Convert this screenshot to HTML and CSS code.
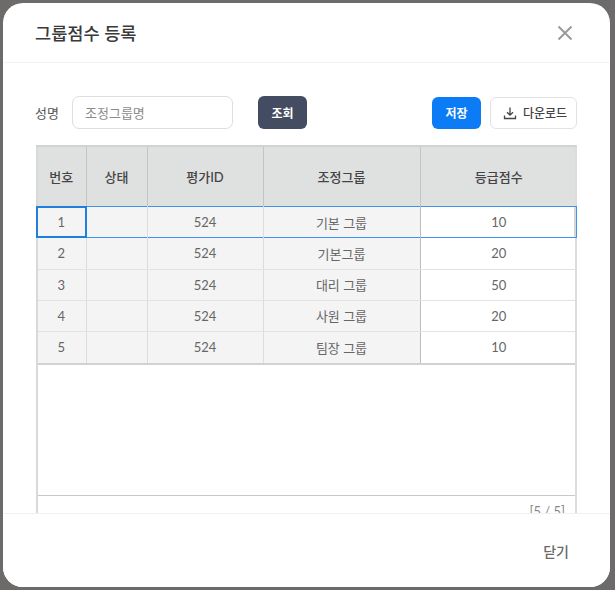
FILE: index.html
```html
<!DOCTYPE html>
<html lang="ko">
<head>
<meta charset="utf-8">
<title>그룹점수 등록</title>
<link rel="stylesheet" href="styles.css">
</head>
<body>
<section class="dialog">
  <header class="dialog-header">
    <h1 class="dialog-title">그룹점수 등록</h1>
    <button class="close-btn" aria-label="닫기">
      <svg width="16" height="16" viewBox="0 0 16 16"><path d="M1.5 1.5 14.5 14.5M14.5 1.5 1.5 14.5" fill="none" stroke="#9a9a9a" stroke-width="2"/></svg>
    </button>
  </header>
  <div class="dialog-body">
    <div class="toolbar">
      <label class="field-label">성명</label>
      <input class="text-input" placeholder="조정그룹명">
      <button class="btn btn-dark">조회</button>
      <div class="toolbar-right">
        <button class="btn btn-primary">저장</button>
        <button class="btn btn-outline">
          <svg width="14" height="14" viewBox="0 0 14 14"><path d="M7 1.5V9M4 6.2 7 9.2 10 6.2M1.5 9.5V12.5H12.5V9.5" fill="none" stroke="#444" stroke-width="1.3"/></svg>
          다운로드
        </button>
      </div>
    </div>
    <div class="grid">
      <table class="grid-table">
        <colgroup><col class="c1"><col class="c2"><col class="c3"><col class="c4"><col class="c5"></colgroup>
        <thead>
          <tr><th>번호</th><th>상태</th><th>평가ID</th><th>조정그룹</th><th>등급점수</th></tr>
        </thead>
        <tbody>
          <tr class="selected"><td class="ro focus">1</td><td class="ro"></td><td class="ro">524</td><td class="ro">기본 그룹</td><td>10</td></tr>
          <tr><td class="ro">2</td><td class="ro"></td><td class="ro">524</td><td class="ro">기본그룹</td><td>20</td></tr>
          <tr><td class="ro">3</td><td class="ro"></td><td class="ro">524</td><td class="ro">대리 그룹</td><td>50</td></tr>
          <tr><td class="ro">4</td><td class="ro"></td><td class="ro">524</td><td class="ro">사원 그룹</td><td>20</td></tr>
          <tr class="last"><td class="ro">5</td><td class="ro"></td><td class="ro">524</td><td class="ro">팀장 그룹</td><td>10</td></tr>
        </tbody>
      </table>
      <div class="grid-empty"></div>
      <div class="grid-status">[5 / 5]</div>
    </div>
  </div>
  <footer class="dialog-footer">
    <button class="text-btn">닫기</button>
  </footer>
</section>
</body>
</html>
```
FILE: styles.css
```css
* { box-sizing: border-box; }
html, body { height: 100%; }
body {
  margin: 0;
  padding: 3px 5px 3px 3px;
  overflow: hidden;
  background: #6c6b6a;
  font-family: Lato, "Noto Sans CJK KR", sans-serif;
  color: #555;
  font-size: 13px;
}
button, input { font-family: inherit; }
.dialog {
  position: relative;
  height: 584px;
  background: #fff;
  border-radius: 20px;
  display: flex;
  flex-direction: column;
  overflow: hidden;
}
.dialog-header {
  height: 60px;
  flex: none;
  display: flex;
  align-items: center;
  justify-content: space-between;
  padding: 0 37px 0 32px;
  border-bottom: 1px solid #f3f3f3;
}
.dialog-title {
  margin: 0;
  font-size: 17.6px;
  font-weight: 500;
  color: #3a3a3a;
}
.close-btn {
  width: 16px;
  height: 16px;
  padding: 0;
  border: 0;
  background: none;
  display: block;
}
.close-btn svg { display: block; }
.dialog-body {
  flex: 1;
  min-height: 0;
  overflow: hidden;
  padding: 33px 33px 0;
  display: flex;
  flex-direction: column;
}
.toolbar {
  display: flex;
  align-items: center;
  height: 33px;
  margin-bottom: 16px;
  flex: none;
  width: 541px;
}
.field-label {
  width: 37px;
  margin-left: -1px;
  font-size: 13px;
  color: #555;
}
.text-input {
  width: 161px;
  height: 33px;
  border: 1px solid #dedede;
  border-radius: 7px;
  padding: 0 12px;
  font-size: 13px;
  outline: none;
  margin-right: 25px;
}
.text-input::placeholder { color: #8b8b8b; opacity: 1; }
.btn {
  height: 33px;
  border-radius: 6px;
  border: 1px solid transparent;
  font-size: 12px;
  font-weight: 700;
  padding: 0;
}
.btn-dark { width: 49px; background: #434c60; color: #fff; }
.toolbar-right {
  margin-left: auto;
  display: flex;
  gap: 9px;
}
.btn-primary { width: 49px; height: 32px; background: #0b7cf5; color: #fff; }
.btn-outline {
  width: 87px;
  height: 32px;
  padding-left: 3px;
  background: #fff;
  border-color: #e2e2e2;
  color: #444;
  font-weight: 500;
  display: flex;
  align-items: center;
  justify-content: center;
  gap: 6px;
}
.grid {
  flex: none;
  height: 400px;
  width: 541px;
  border-left: 2px solid #d9d9d9;
  border-right: 2px solid #dcdcdc;
  border-top: 2px solid #d2d2d2;
  display: flex;
  flex-direction: column;
}
.grid-table {
  width: 537px;
  table-layout: fixed;
  border-collapse: collapse;
  flex: none;
}
.c1 { width: 48px; }
.c2 { width: 61px; }
.c3 { width: 116px; }
.c4 { width: 157px; }
.c5 { width: 155px; }
th {
  height: 59px;
  background: #dfe0e0;
  color: #444;
  font-size: 13px;
  font-weight: 500;
  border-right: 1px solid #c4c4c4;
  padding: 0;
}
th:first-child { padding-right: 1px; }
th:last-child { border-right: 0; padding-left: 2px; }
td {
  height: 31px;
  padding: 0;
  text-align: center;
  font-size: 13px;
  color: #666;
  border-right: 1px solid #dcdcdc;
  border-bottom: 1px solid #e2e2e2;
  background: #fff;
}
td:first-child { padding-right: 1px; }
td:last-child { border-right: 0; padding-left: 2px; }
td.ro { background: #f4f4f4; }
td.ro:nth-child(4) { border-right-color: #bdbdbd; }
.selected td {
  position: relative;
  height: 32px;
  box-shadow: inset 0 1px 0 #3d93ea, inset 0 -1px 0 #3d93ea;
  border-bottom: 0;
}
.selected td:last-child::after {
  content: "";
  position: absolute;
  top: 0;
  bottom: 0;
  right: -2px;
  width: 2px;
  border-right: 1px solid #3d93ea;
  border-top: 1px solid #3d93ea;
  border-bottom: 1px solid #3d93ea;
  background: #d6d6d6;
}
.selected td.focus::after {
  content: "";
  position: absolute;
  top: 0;
  bottom: 0;
  left: -2px;
  right: -1px;
  border: 2px solid #1f7fdd;
}
.last td { height: 32px; border-bottom: 0; }
.grid-empty {
  flex: none;
  height: 133px;
  border-top: 2px solid #d2d2d2;
  border-bottom: 1px solid #c9c9c9;
}
.grid-status {
  text-align: right;
  padding: 7px 10px 0 0;
  color: #888;
  font-size: 13px;
  line-height: 16px;
}
.dialog-footer {
  flex: none;
  height: 74px;
  border-top: 1px solid #f1f1f1;
  display: flex;
  justify-content: flex-end;
  align-items: flex-start;
  padding: 27px 41px 0 0;
  background: #fff;
}
.text-btn {
  border: 0;
  background: none;
  padding: 0;
  font-size: 14px;
  font-weight: 500;
  color: #6a6a6a;
}
```
